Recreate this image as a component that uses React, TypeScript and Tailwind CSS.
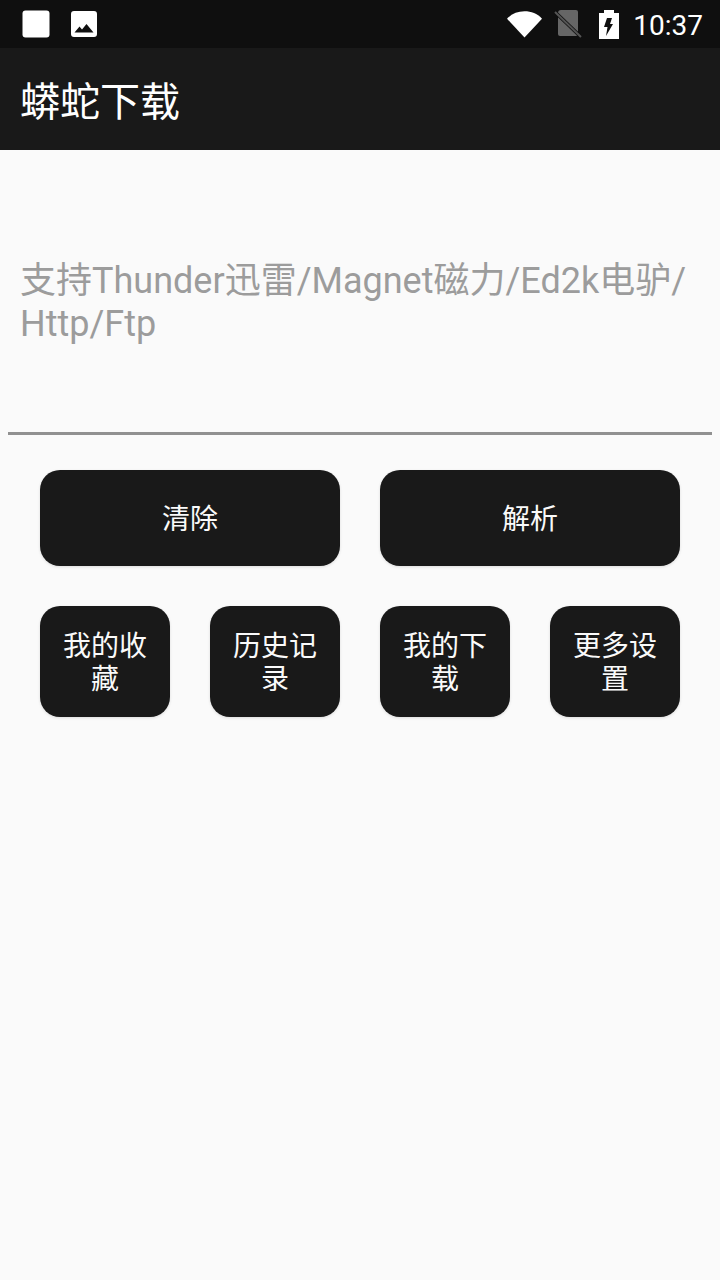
const Btn = ({ text, cls }: { text: string; cls: string }) => (
  <button className={`${cls} bg-[#191919] text-[#fafafa] rounded-[20px] shadow-[0_1px_3px_rgba(0,0,0,0.12)] text-[28px] leading-[33px] text-center pt-[2px]`}>
    {text}
  </button>
);

export default function App() {
  return (
    <div className="w-[720px] h-[1280px] bg-[#fafafa] flex flex-col font-['Roboto','Noto_Sans_CJK_SC',sans-serif]">
      <div className="h-12 bg-[#0f0f0f] flex items-center justify-between pl-[22px] pr-[17px] text-white">
        <div className="flex items-center gap-[21px]">
          <svg width="28" height="28" viewBox="0 0 28 28"><rect x="0.5" y="0.5" width="27" height="27" rx="3" fill="#fff" /></svg>
          <svg width="26" height="26" viewBox="0 0 26 26">
            <path fillRule="evenodd" fill="#fff" d="M3 0h20a3 3 0 0 1 3 3v20a3 3 0 0 1-3 3H3a3 3 0 0 1-3-3V3a3 3 0 0 1 3-3zM3.500 21.500h19L15.500 13l-4.500 5.500-2.500-3z" />
          </svg>
        </div>
        <div className="flex items-center">
          <svg width="35" height="28" viewBox="0 0 36 28" className="mr-[12px]"><path d="M0 8.500C5 3.500 11 1 18 1s13 2.500 18 7.500L18 28z" fill="#fff" /></svg>
          <svg width="28" height="28" viewBox="0 0 28 28" className="mr-[17px]">
            <path d="M7 0h11l4 0a2 2 0 0 1 2 2v22a2 2 0 0 1-2 2H6a2 2 0 0 1-2-2V3a3 3 0 0 1 3-3z" fill="#666" />
            <path d="M1 2l26 25" stroke="#0f0f0f" strokeWidth="3.500" />
            <path d="M1 2l26 25" stroke="#555" strokeWidth="2" />
          </svg>
          <svg width="20" height="29" viewBox="0 0 20 29" className="mr-[14px]">
            <path fill="#fff" fillRule="evenodd" d="M5 0h10v3h5v26H0V3h5zM8 8h5l-2 6h3L7 26l1.500-9H5z" />
          </svg>
          <span className="text-[28px] leading-none text-white pt-1">10:37</span>
        </div>
      </div>
      <div className="h-[102px] bg-[#191919] flex items-center pl-5 pt-2">
        <span className="text-white text-[40px] leading-none">蟒蛇下载</span>
      </div>
      <div className="mx-2 h-[285px] border-b-[3px] border-[#919191] pl-3 pt-[110px]">
        <div className="text-[#9c9c9c] text-[36px] leading-[43px]">
          支持Thunder迅雷/Magnet磁力/Ed2k电驴/<br />Http/Ftp
        </div>
      </div>
      <div className="px-10 pt-[35px] flex flex-col gap-10">
        <div className="flex gap-10">
          <Btn text="清除" cls="flex-1 h-24" />
          <Btn text="解析" cls="flex-1 h-24" />
        </div>
        <div className="flex gap-10">
          <Btn text="我的收藏" cls="flex-1 h-[111px] px-5" />
          <Btn text="历史记录" cls="flex-1 h-[111px] px-5" />
          <Btn text="我的下载" cls="flex-1 h-[111px] px-5" />
          <Btn text="更多设置" cls="flex-1 h-[111px] px-5" />
        </div>
      </div>
    </div>
  );
}
